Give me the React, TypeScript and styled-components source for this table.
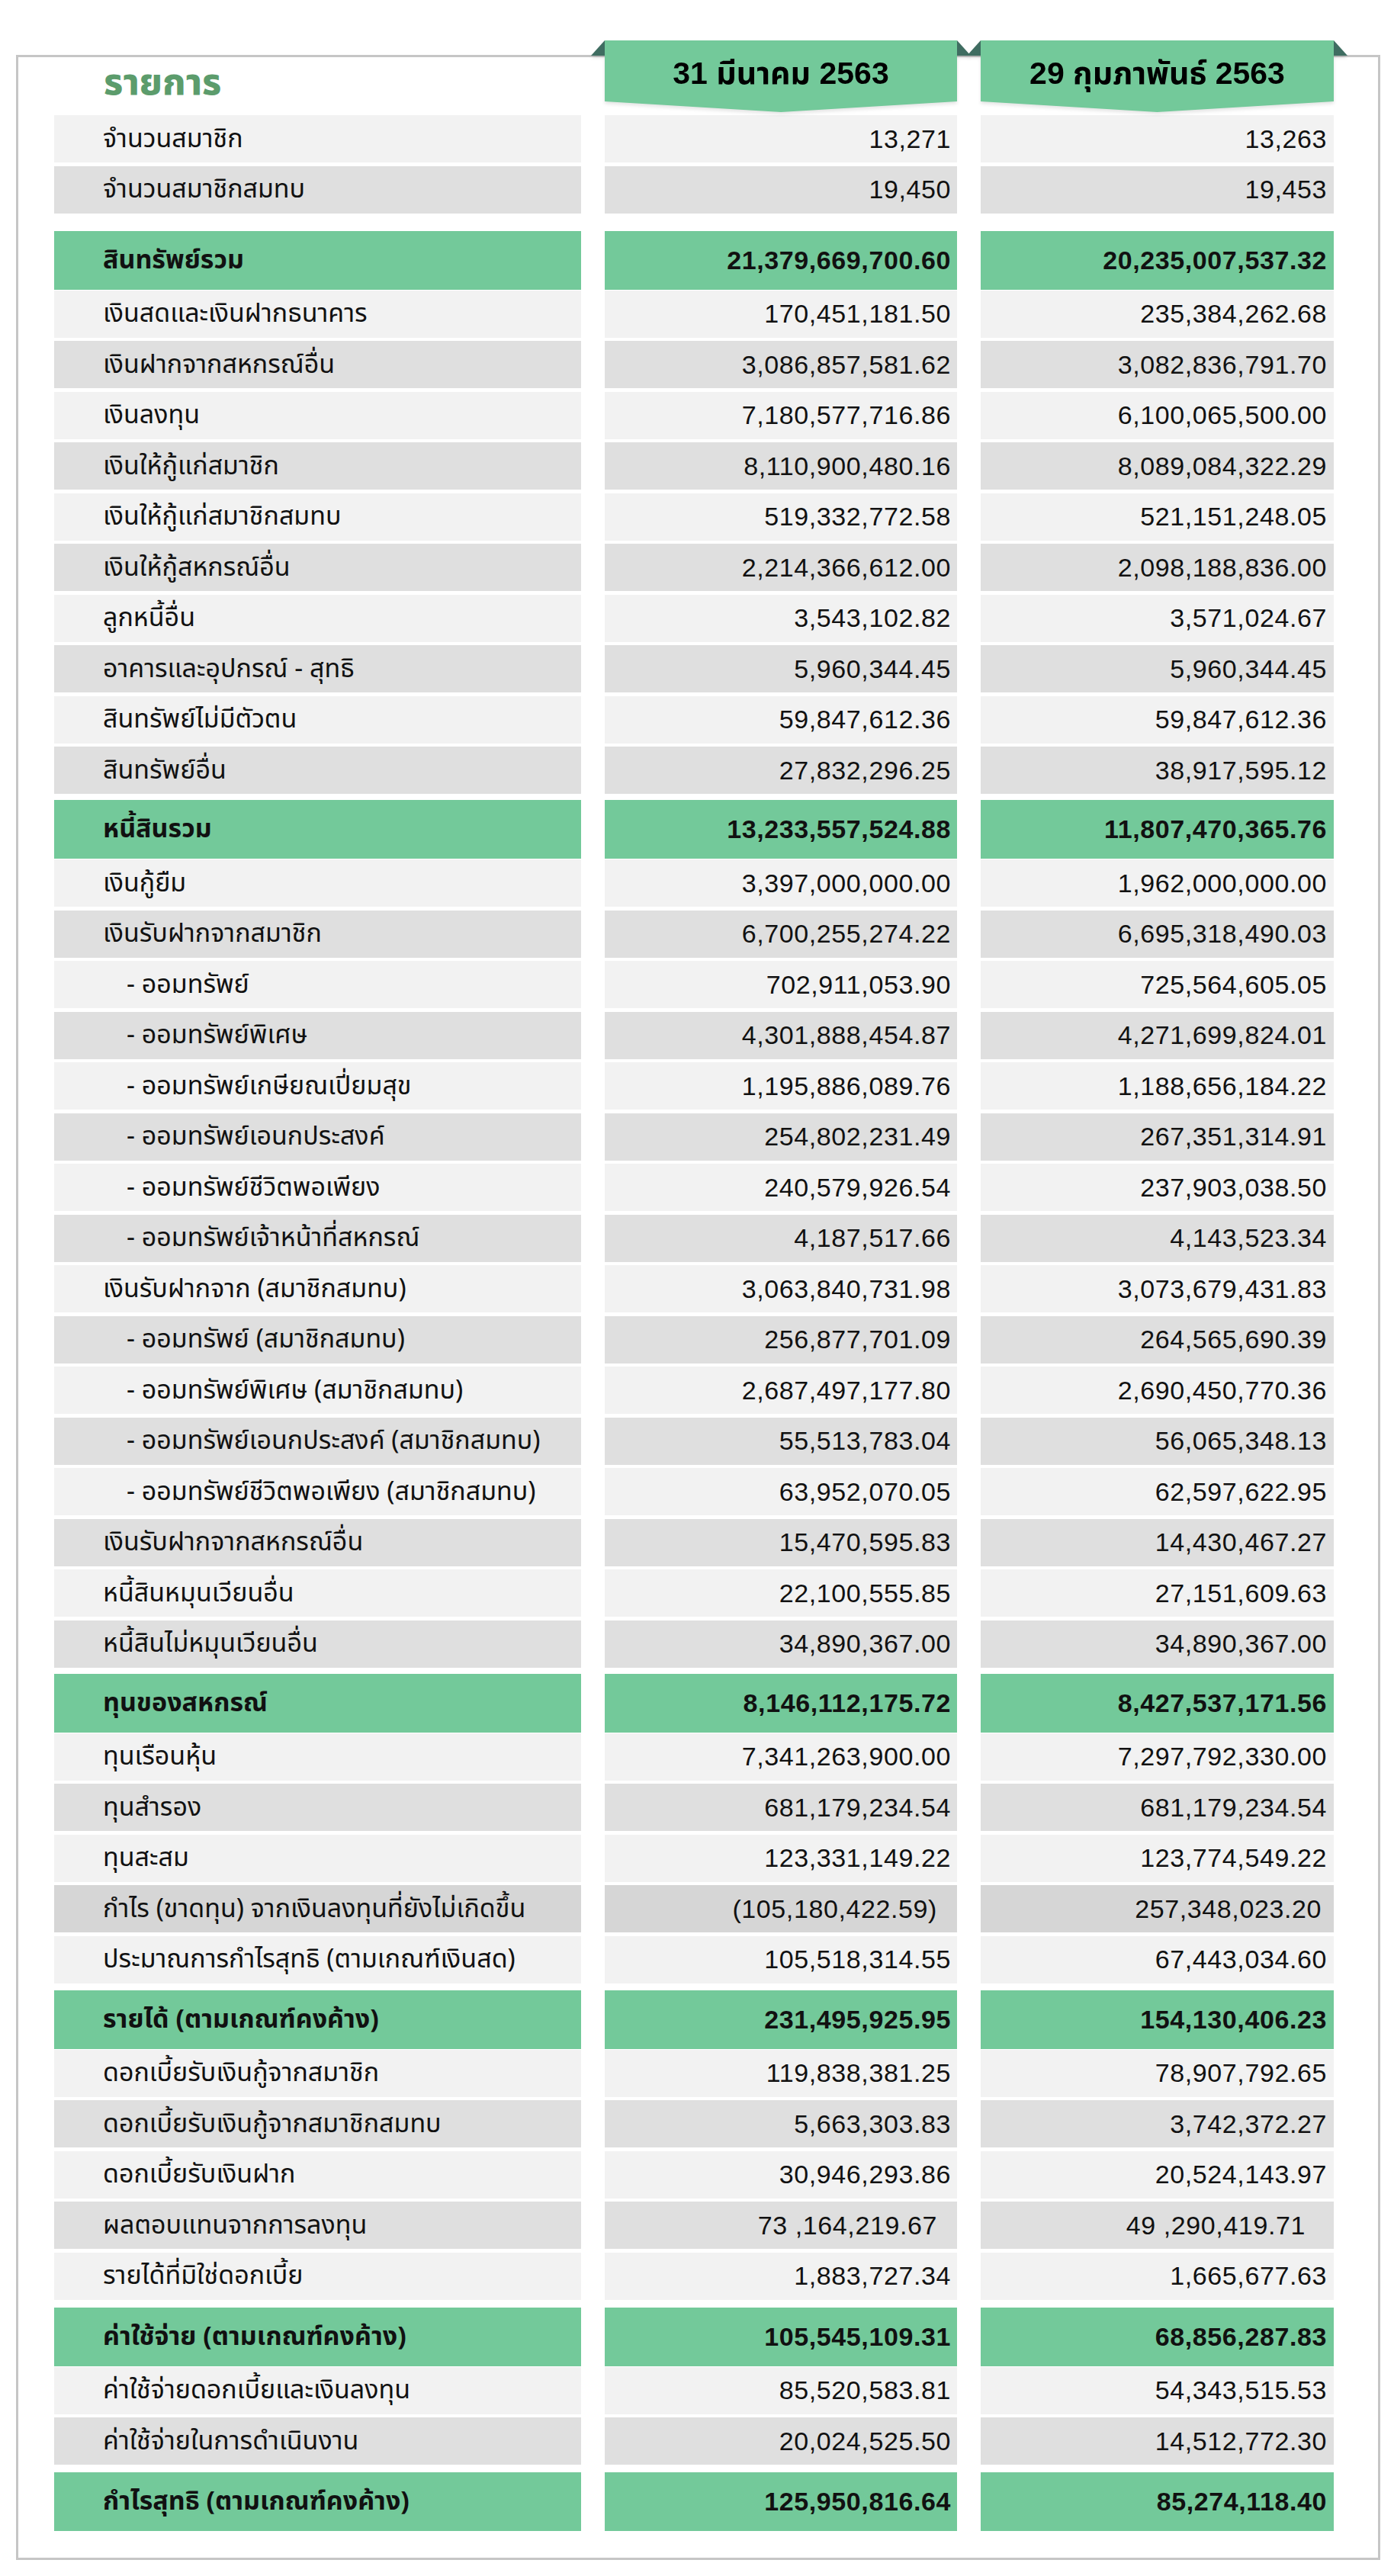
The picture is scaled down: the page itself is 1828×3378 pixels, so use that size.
import React from "react";
import styled, { createGlobalStyle, css } from "styled-components";

const GlobalStyle = createGlobalStyle`
  html, body {
    margin: 0;
    padding: 0;
    background: #ffffff;
  }
  body {
    font-family: "Noto Sans Thai", "Noto Sans", "Liberation Sans", sans-serif;
    color: #111;
  }
  * { box-sizing: border-box; }
`;

const GREEN = "#73c99a";
const FOLD = "#3f6d61";
const COLS = "691px 462px 463px";

const Page = styled.div`
  width: 1828px;
  min-height: 3378px;
  padding: 72px 18px 18px 21px;
`;

const Card = styled.div`
  width: 1789px;
  border: 3px solid #c6c6c6;
  background: #fff;
  padding: 0 58px 38px 47px;
`;

const HeaderRow = styled.div`
  display: grid;
  grid-template-columns: ${COLS};
  column-gap: 31px;
  height: 76px;
  align-items: start;
`;

const Title = styled.div`
  padding: 5px 0 0 65px;
  font-size: 48px;
  font-weight: 800;
  color: #5c9c6c;
  line-height: 60px;
`;

const Ribbon = styled.div`
  position: relative;
  margin-top: -22px;
  height: 94px;
  filter: drop-shadow(0 3px 2px rgba(0, 0, 0, 0.1));

  &::before,
  &::after {
    content: "";
    position: absolute;
    top: 0;
    width: 18px;
    height: 20px;
    background: ${FOLD};
  }
  &::before {
    left: -18px;
    clip-path: polygon(100% 0, 100% 100%, 0 100%);
  }
  &::after {
    right: -18px;
    clip-path: polygon(0 0, 100% 100%, 0 100%);
  }
`;

const RibbonFace = styled.div`
  height: 100%;
  background: ${GREEN};
  clip-path: polygon(0 0, 100% 0, 100% 85%, 50% 100%, 0 85%);
  display: flex;
  align-items: center;
  justify-content: center;
  padding-bottom: 6px;
  font-family: "Liberation Sans", "Noto Sans Thai", sans-serif;
  font-size: 41px;
  font-weight: 700;
  color: #000;
`;

const Body = styled.div`
  display: flex;
  flex-direction: column;
`;

const Section = styled.section<{ $gap: number }>`
  display: flex;
  flex-direction: column;
  gap: 4.5px;
  margin-top: ${(p) => p.$gap}px;
`;

const Row = styled.div<{ $total?: boolean }>`
  display: grid;
  grid-template-columns: ${COLS};
  column-gap: 31px;
  height: ${(p) => (p.$total ? 77 : 62)}px;
  ${(p) =>
    p.$total &&
    css`
      margin-bottom: -3.5px;
    `}
`;

type Tone = "light" | "dark" | "deep" | "green";

const toneColor: Record<Tone, string> = {
  light: "#f2f2f2",
  dark: "#dfdfdf",
  deep: "#d6d6d6",
  green: GREEN,
};

const Cell = styled.div<{ $tone: Tone }>`
  background: ${(p) => toneColor[p.$tone]};
  display: flex;
  align-items: center;
  white-space: pre;
  font-weight: ${(p) => (p.$tone === "green" ? 700 : 400)};
  color: #111;
`;

const LabelCell = styled(Cell)<{ $sub?: boolean }>`
  padding-left: ${(p) => (p.$sub ? 95 : 64)}px;
  font-family: "Noto Sans Thai", "Noto Sans", sans-serif;
  font-size: 34px;
`;

const ValueCell = styled(Cell)<{ $inset: number }>`
  justify-content: flex-end;
  padding-right: ${(p) => p.$inset}px;
  font-family: "Liberation Sans", "Arial", sans-serif;
  font-size: 34px;
  letter-spacing: 0.6px;
`;

type Item = {
  label: string;
  a: string;
  b: string;
  sub?: boolean;
  deep?: boolean;
  insetA?: number;
  insetB?: number;
};

type SectionData = {
  gap: number;
  head?: [string, string, string];
  items: Item[];
};

const sections: SectionData[] = [
  {
    gap: 0,
    items: [
      { label: "จำนวนสมาชิก", a: "13,271", b: "13,263" },
      { label: "จำนวนสมาชิกสมทบ", a: "19,450", b: "19,453" },
    ],
  },
  {
    gap: 23,
    head: ["สินทรัพย์รวม", "21,379,669,700.60", "20,235,007,537.32"],
    items: [
      { label: "เงินสดและเงินฝากธนาคาร", a: "170,451,181.50", b: "235,384,262.68" },
      { label: "เงินฝากจากสหกรณ์อื่น", a: "3,086,857,581.62", b: "3,082,836,791.70" },
      { label: "เงินลงทุน", a: "7,180,577,716.86", b: "6,100,065,500.00" },
      { label: "เงินให้กู้แก่สมาชิก", a: "8,110,900,480.16", b: "8,089,084,322.29" },
      { label: "เงินให้กู้แก่สมาชิกสมทบ", a: "519,332,772.58", b: "521,151,248.05" },
      { label: "เงินให้กู้สหกรณ์อื่น", a: "2,214,366,612.00", b: "2,098,188,836.00" },
      { label: "ลูกหนี้อื่น", a: "3,543,102.82", b: "3,571,024.67" },
      { label: "อาคารและอุปกรณ์ - สุทธิ", a: "5,960,344.45", b: "5,960,344.45" },
      { label: "สินทรัพย์ไม่มีตัวตน", a: "59,847,612.36", b: "59,847,612.36" },
      { label: "สินทรัพย์อื่น", a: "27,832,296.25", b: "38,917,595.12" },
    ],
  },
  {
    gap: 8,
    head: ["หนี้สินรวม", "13,233,557,524.88", "11,807,470,365.76"],
    items: [
      { label: "เงินกู้ยืม", a: "3,397,000,000.00", b: "1,962,000,000.00" },
      { label: "เงินรับฝากจากสมาชิก", a: "6,700,255,274.22", b: "6,695,318,490.03" },
      { label: "- ออมทรัพย์", a: "702,911,053.90", b: "725,564,605.05", sub: true },
      { label: "- ออมทรัพย์พิเศษ", a: "4,301,888,454.87", b: "4,271,699,824.01", sub: true },
      { label: "- ออมทรัพย์เกษียณเปี่ยมสุข", a: "1,195,886,089.76", b: "1,188,656,184.22", sub: true },
      { label: "- ออมทรัพย์เอนกประสงค์", a: "254,802,231.49", b: "267,351,314.91", sub: true },
      { label: "- ออมทรัพย์ชีวิตพอเพียง", a: "240,579,926.54", b: "237,903,038.50", sub: true },
      { label: "- ออมทรัพย์เจ้าหน้าที่สหกรณ์", a: "4,187,517.66", b: "4,143,523.34", sub: true },
      { label: "เงินรับฝากจาก (สมาชิกสมทบ)", a: "3,063,840,731.98", b: "3,073,679,431.83" },
      { label: "- ออมทรัพย์ (สมาชิกสมทบ)", a: "256,877,701.09", b: "264,565,690.39", sub: true },
      { label: "- ออมทรัพย์พิเศษ (สมาชิกสมทบ)", a: "2,687,497,177.80", b: "2,690,450,770.36", sub: true },
      { label: "- ออมทรัพย์เอนกประสงค์ (สมาชิกสมทบ)", a: "55,513,783.04", b: "56,065,348.13", sub: true },
      { label: "- ออมทรัพย์ชีวิตพอเพียง (สมาชิกสมทบ)", a: "63,952,070.05", b: "62,597,622.95", sub: true },
      { label: "เงินรับฝากจากสหกรณ์อื่น", a: "15,470,595.83", b: "14,430,467.27" },
      { label: "หนี้สินหมุนเวียนอื่น", a: "22,100,555.85", b: "27,151,609.63" },
      { label: "หนี้สินไม่หมุนเวียนอื่น", a: "34,890,367.00", b: "34,890,367.00" },
    ],
  },
  {
    gap: 8,
    head: ["ทุนของสหกรณ์", "8,146,112,175.72", "8,427,537,171.56"],
    items: [
      { label: "ทุนเรือนหุ้น", a: "7,341,263,900.00", b: "7,297,792,330.00" },
      { label: "ทุนสำรอง", a: "681,179,234.54", b: "681,179,234.54" },
      { label: "ทุนสะสม", a: "123,331,149.22", b: "123,774,549.22" },
      {
        label: "กำไร (ขาดทุน) จากเงินลงทุนที่ยังไม่เกิดขึ้น",
        a: "(105,180,422.59)",
        b: "257,348,023.20",
        deep: true,
        insetA: 26,
        insetB: 16,
      },
      { label: "ประมาณการกำไรสุทธิ (ตามเกณฑ์เงินสด)", a: "105,518,314.55", b: "67,443,034.60" },
    ],
  },
  {
    gap: 9,
    head: ["รายได้ (ตามเกณฑ์คงค้าง)", "231,495,925.95", "154,130,406.23"],
    items: [
      { label: "ดอกเบี้ยรับเงินกู้จากสมาชิก", a: "119,838,381.25", b: "78,907,792.65" },
      { label: "ดอกเบี้ยรับเงินกู้จากสมาชิกสมทบ", a: "5,663,303.83", b: "3,742,372.27" },
      { label: "ดอกเบี้ยรับเงินฝาก", a: "30,946,293.86", b: "20,524,143.97" },
      { label: "ผลตอบแทนจากการลงทุน", a: "73 ,164,219.67", b: "49 ,290,419.71", insetA: 26, insetB: 37 },
      { label: "รายได้ที่มิใช่ดอกเบี้ย", a: "1,883,727.34", b: "1,665,677.63" },
    ],
  },
  {
    gap: 10,
    head: ["ค่าใช้จ่าย (ตามเกณฑ์คงค้าง)", "105,545,109.31", "68,856,287.83"],
    items: [
      { label: "ค่าใช้จ่ายดอกเบี้ยและเงินลงทุน", a: "85,520,583.81", b: "54,343,515.53" },
      { label: "ค่าใช้จ่ายในการดำเนินงาน", a: "20,024,525.50", b: "14,512,772.30" },
    ],
  },
  {
    gap: 10,
    head: ["กำไรสุทธิ (ตามเกณฑ์คงค้าง)", "125,950,816.64", "85,274,118.40"],
    items: [],
  },
];

export default function App() {
  return (
    <>
      <GlobalStyle />
      <Page>
        <Card>
          <HeaderRow>
            <Title>รายการ</Title>
            <Ribbon>
              <RibbonFace>31 มีนาคม 2563</RibbonFace>
            </Ribbon>
            <Ribbon>
              <RibbonFace>29 กุมภาพันธ์ 2563</RibbonFace>
            </Ribbon>
          </HeaderRow>
          <Body>
            {sections.map((s, si) => (
              <Section key={si} $gap={s.gap}>
                {s.head && (
                  <Row $total>
                    <LabelCell $tone="green">{s.head[0]}</LabelCell>
                    <ValueCell $tone="green" $inset={8}>
                      {s.head[1]}
                    </ValueCell>
                    <ValueCell $tone="green" $inset={9}>
                      {s.head[2]}
                    </ValueCell>
                  </Row>
                )}
                {s.items.map((it, i) => {
                  const tone: Tone = it.deep ? "deep" : i % 2 === 0 ? "light" : "dark";
                  return (
                    <Row key={i}>
                      <LabelCell $tone={tone} $sub={it.sub}>
                        {it.label}
                      </LabelCell>
                      <ValueCell $tone={tone} $inset={it.insetA ?? 8}>
                        {it.a}
                      </ValueCell>
                      <ValueCell $tone={tone} $inset={it.insetB ?? 9}>
                        {it.b}
                      </ValueCell>
                    </Row>
                  );
                })}
              </Section>
            ))}
          </Body>
        </Card>
      </Page>
    </>
  );
}
